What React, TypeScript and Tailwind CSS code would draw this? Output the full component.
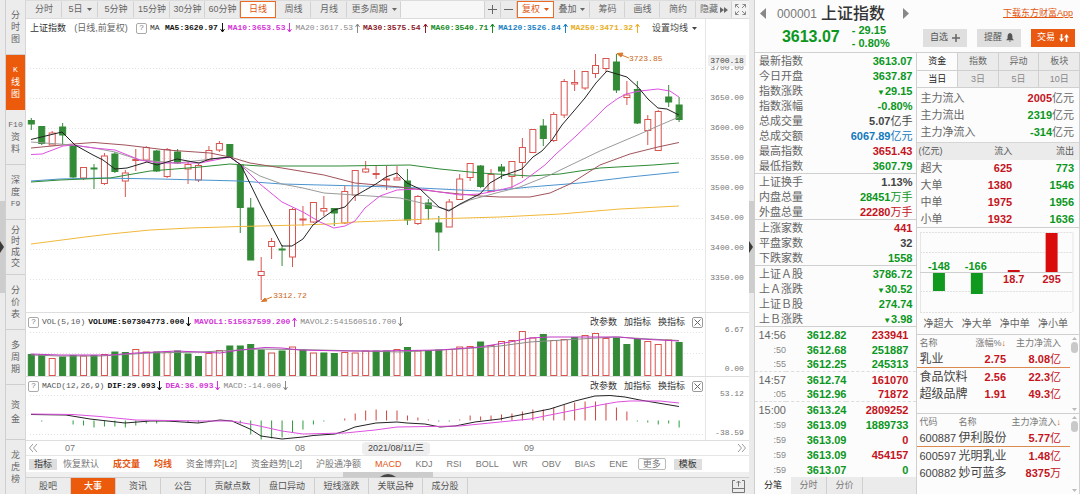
import React from "react";

type Dir = "r" | "g";
type Candle = [high: number, top: number, bottom: number, low: number, dir: Dir];

const RED = "#d9534f";
const GREEN = "#338a37";
const STEP = 10.45;
const xAt = (i: number) => 31.3 + i * STEP;

const candles: Candle[] = [
  [118, 120.5, 124, 130, "g"], [126, 126.5, 143.5, 145, "g"], [131, 133, 145, 145, "r"],
  [123, 127, 135, 145, "g"], [145, 145.5, 177, 178, "g"], [167, 167.5, 178, 180, "r"],
  [164, 168, 169, 189, "g"], [153, 156, 183.5, 185, "r"], [152, 154, 171.5, 173, "g"],
  [170, 173, 181, 197, "r"], [149, 159.5, 160.5, 171, "r"], [146, 147.5, 160, 162, "r"],
  [150, 151, 171, 172, "g"], [148, 149.5, 176.5, 178, "r"], [149, 152, 163, 164, "g"],
  [161, 164.5, 169, 184, "r"], [164, 165.5, 180, 182, "r"], [146, 150.5, 160, 161, "r"],
  [141, 143.5, 150, 152, "r"], [144, 144.5, 157, 157, "g"], [164, 165, 207.5, 233, "g"],
  [198, 208, 260, 260, "g"], [257, 271.5, 275.5, 300, "r"], [238, 241.5, 246.5, 259, "r"],
  [245, 249, 250, 266, "g"], [208, 209.5, 257, 267, "r"], [206, 219, 220, 226, "r"],
  [202, 202.5, 222, 223, "r"], [196, 208.5, 211, 216, "r"], [208, 208.5, 213, 226, "g"],
  [186, 191.5, 223, 224, "r"], [170, 170.5, 195, 201, "r"], [161, 169, 172, 173, "r"],
  [165, 173.5, 174.5, 179, "r"], [166, 179, 180, 190, "r"], [166, 178, 180, 180, "r"],
  [169, 181, 220, 225, "g"], [195, 196.5, 223.5, 225, "r"], [199, 203, 208.5, 220, "g"],
  [216, 223, 232, 251, "g"], [199, 202, 227, 227, "r"], [174, 179, 199.5, 200, "r"],
  [163, 163.5, 177.5, 181, "r"], [165, 166, 186.5, 188, "g"], [169, 174.5, 191.5, 192, "r"],
  [164, 167, 171, 179, "g"], [161, 161.5, 176.5, 188, "r"], [138, 147.5, 162.5, 178, "r"],
  [129, 129.5, 152.5, 153, "r"], [119, 126, 138.5, 146, "g"], [112, 114.5, 140.5, 142, "r"],
  [79, 81.5, 115, 118, "r"], [70, 82.5, 84, 91, "r"], [71, 71.5, 88, 90, "r"],
  [54, 65.5, 73.5, 78, "r"], [58, 58.5, 68.5, 72, "r"], [54, 62, 90, 93, "g"],
  [81, 95, 97.5, 105, "r"], [81, 89.5, 123, 124, "g"], [115, 119.5, 130.5, 145, "r"],
  [110, 111.5, 150.5, 151, "r"], [85, 97, 102, 107, "g"], [97, 105, 119.5, 122, "g"],
];

const volumes: number[] = [
  353.5, 354, 357.5, 356, 354.5, 355, 354.5, 353.5, 351, 351.5, 348.5, 351, 351, 351, 350, 353,
  355.5, 352.5, 349.5, 345, 345, 343.5, 349, 352, 350, 346, 349, 352, 352, 352.5, 351.5, 352,
  350, 350, 350, 348.5, 346.5, 350, 349.5, 349, 348.5, 346, 345.5, 341, 344.5, 340.5, 339.5, 330.5,
  337, 333.5, 339.5, 338.5, 336.5, 334.5, 332.5, 337.5, 337, 343.5, 338, 340.5, 343.5, 339, 341.5,
];
const volumeDirs = "ggrggrgrggrrgrgggrrggggrgrgrggrrrggrgrggrrrgrrrrrgrrgrrrgggrrrg";

const macdBars: number[] = [
  0, 1, 0, 0, 4, 5, 7, 6, 6, 7, 5, 3, 3, 1, 1, 2, 2, 1, 0, 0, 3, 14, 19, 18, 17, 12, 9, 4, 1, 0,
  -2, -7, -10, -11, -10, -10, -5, -3, -1, 1, 1, -1, -5, -4, -5, -6, -7, -9, -11, -11, -13, -16,
  -18, -19, -19, -17, -13, -9, 1, 2, 4, 3, 7,
];

const averages: { color: string; points: string }[] = [
  { color: "#f0b93a", points: "31,244 62,240 85,237 110,234 150,230 190,228 240,226.5 300,225 330,224 355,222 430,219 500,217 560,214 620,209 679,206" },
  { color: "#4a93cf", points: "31,181 60,179 100,178 160,179 240,181 282,184 360,186 420,188 480,191 500,190 530,187 580,183 630,177 679,172" },
  { color: "#2d8a34", points: "31,182 60,180 110,178 150,171 200,167 230,164 260,166 340,166 410,165 440,169 480,173 530,176 560,174 600,168 653,165 679,163" },
  { color: "#a0525a", points: "31,148 73,144 94,142.5 125,145 167,150 210,153 230,157 250,163 282,168 324,175 355,183 400,187 440,192 460,194 480,196 500,197 530,197 550,193 570,184 600,165 630,154 658,147 679,142.5" },
  { color: "#9a9a9a", points: "31,142 73,145 94,148 115,152 140,160 177,163 230,157 241,165 260,176 282,184 303,188 324,193 355,195 400,198 430,205 449,210 470,200 500,192 520,187 550,175 575,163 600,151 640,134 658,126 679,117" },
  { color: "#dd4fe0", points: "31,154.5 42,154 63,146 73,145 94,148 115,150 130,156 140,160 160,163 200,163 215,160 230,157 241,165 260,184 282,202 303,212 320,222 334,228 345,226 355,221 365,208 380,196 397,190 420,189 440,192 460,195 480,194 500,190 512,187 522,182 533,174 545,165 555,155 575,137 595,118 606,107 617,99 626,94 640,91 658,89 670,91 679,97" },
  { color: "#222222", points: "31,139.5 62,132 75,145 93,155 103,160 115,169 127,168 147,162 157,165 167,162 177,159 188,161 199,163 210,159 230,157 241,165 261,206 282,246 292,246 303,239 313,225 324,217 334,210 345,207 355,196 376,184 386,177 397,173 407,183 420,189 439,207 449,211 460,204 480,194 490,183 502,176 522,169 533,157 542,151 552,140 562,125 574,111 585,98 596,83 607,71 617,74 627,77 638,87 648,99 658,108 667,109 679,115" },
];

function Candles() {
  return (
    <>
      {candles.map(([hi, top, bot, lo, dir], i) => {
        const x = xAt(i);
        const c = dir === "r" ? RED : GREEN;
        return (
          <g key={i} stroke={c} strokeWidth="1">
            <line x1={x} x2={x} y1={hi} y2={top} />
            <line x1={x} x2={x} y1={bot} y2={lo} />
            <rect x={x - 3} y={top} width="6" height={bot - top} fill={dir === "r" ? "none" : c} />
          </g>
        );
      })}
    </>
  );
}

function Line({ points, color }: { points: string; color: string }) {
  return <polyline points={points} fill="none" stroke={color} strokeWidth="1" strokeLinejoin="round" />;
}

function Grid({ ys }: { ys: number[] }) {
  return (
    <>
      {ys.map((y) => (
        <line key={y} x1="30" x2="705" y1={y} y2={y} stroke="#e2e2e2" strokeDasharray="1 2" />
      ))}
    </>
  );
}

function Arrow({ up }: { up?: boolean }) {
  return (
    <svg width="5" height="10" viewBox="0 0 5 10" className="shrink-0" fill="none" stroke="currentColor" aria-hidden="true">
      {up ? <path d="M2.5 10V1M0.5 4L2.5 1L4.5 4" /> : <path d="M2.5 0V9M0.5 6L2.5 9L4.5 6" />}
    </svg>
  );
}

function Caret() {
  return (
    <svg width="5" height="3" viewBox="0 0 5 3" className="shrink-0" fill="currentColor" aria-hidden="true">
      <path d="M0 0H5L2.5 3Z" />
    </svg>
  );
}

function Reading({ text, color, bold, up }: { text: string; color: string; bold?: boolean; up?: boolean }) {
  return (
    <span className={`flex items-center gap-0.5 whitespace-nowrap font-['Liberation_Mono','Noto_Sans_CJK_SC',monospace] text-[8px] ${bold ? "font-bold" : ""} ${color}`}>
      {text}
      <Arrow up={up} />
    </span>
  );
}

function Help() {
  return (
    <button type="button" aria-label="帮助" className="flex h-[11px] w-[11px] shrink-0 items-center justify-center rounded-xs border border-[#aaa] text-[8px] leading-none text-[#777]">
      ?
    </button>
  );
}

function Splitter() {
  return (
    <div className="flex w-[6px] shrink-0 flex-col border-r border-[#cfcfcf] bg-[#ebebeb]">
      <div className="flex-[201]" />
      <button type="button" aria-label="折叠" className="flex flex-[91] items-center bg-[#cdcdcd]">
        <svg width="4" height="12" viewBox="0 0 4 12" aria-hidden="true">
          <path d="M0 0L4 6L0 12Z" fill="#3a3a3a" />
        </svg>
      </button>
      <div className="flex-[202]" />
    </div>
  );
}

const railItems = [
  ["分", "时", "图"], ["K", "线", "图"], ["F10", "资", "料"], ["深", "度", "F9"], ["分", "时", "成", "交"],
  ["分", "价", "表"], ["多", "周", "期"], ["资", "金"], ["龙", "虎", "榜"],
];

function Rail() {
  return (
    <nav className="flex w-5 shrink-0 flex-col border-r border-[#d6d6d6] bg-[#ececec]">
      {railItems.map((chars, i) => (
        <a
          key={i}
          href="#"
          className={`flex flex-1 flex-col items-center justify-center border-b ${chars.length === 4 ? "text-[9px] leading-[11px]" : chars.length === 2 ? "text-[9px] leading-[14px]" : "text-[9px] leading-[12px]"} ${i === 1 ? "border-[#ec5a0c] bg-[#ec5a0c] text-white" : "border-[#cfcfcf] text-[#666]"}`}
        >
          {chars.map((c) => (
            <span key={c} className={/[A-Z]/.test(c) ? "font-['Liberation_Mono',monospace] text-[8px]" : ""}>{c}</span>
          ))}
        </a>
      ))}
    </nav>
  );
}

const periods: { label: string; menu?: boolean; width: string }[] = [
  { label: "分时", width: "w-9" }, { label: "5日", menu: true, width: "w-9" }, { label: "5分钟", width: "w-9" },
  { label: "15分钟", width: "w-9" }, { label: "30分钟", width: "w-[35px]" }, { label: "60分钟", width: "w-[35px]" },
  { label: "日线", width: "w-9" }, { label: "周线", width: "w-[35px]" }, { label: "月线", width: "w-9" },
  { label: "更多周期", menu: true, width: "w-[54px]" },
];
const tools: { label: string; menu?: boolean; width: string }[] = [
  { label: "复权", menu: true, width: "w-[37px]" }, { label: "叠加", menu: true, width: "w-9" },
  { label: "筹码", width: "w-[35px]" }, { label: "画线", width: "w-[35px]" }, { label: "简约", width: "w-9" },
];

function Toolbar() {
  const base = "flex h-full shrink-0 items-center justify-center gap-1 whitespace-nowrap border";
  const idle = "border-transparent border-r-[#d2d2d2] bg-[#ebebeb] text-[#666]";
  const active = "border-[#ec6a22] bg-white text-[#e2560f]";
  return (
    <div className="flex h-[19px] items-stretch border-y border-[#dcdcdc] bg-[#f7f7f7] text-[9px] leading-none">
      {periods.map((p) => (
        <button key={p.label} type="button" className={`${base} ${p.width} ${p.label === "日线" ? active : idle}`}>
          {p.label}
          {p.menu && <Caret />}
        </button>
      ))}
      <div className="flex-1 border-r border-[#d2d2d2]" />
      <button type="button" aria-label="放大" className={`${base} w-4 ${idle}`}>
        <svg width="9" height="9" viewBox="0 0 9 9" stroke="currentColor" aria-hidden="true"><path d="M4.5 0V9M0 4.5H9" /></svg>
      </button>
      <button type="button" aria-label="缩小" className={`${base} w-4 ${idle}`}>
        <svg width="9" height="9" viewBox="0 0 9 9" stroke="currentColor" aria-hidden="true"><path d="M0 4.5H9" /></svg>
      </button>
      {tools.map((p) => (
        <button key={p.label} type="button" className={`${base} ${p.width} ${p.label === "复权" ? active : idle}`}>
          {p.label}
          {p.menu && <Caret />}
        </button>
      ))}
      <button type="button" className={`${base} w-9 ${idle}`}>
        隐藏
        <svg width="8" height="6" viewBox="0 0 8 6" fill="currentColor" className="-ml-0.5" aria-hidden="true"><path d="M0 0L4 3L0 6ZM4 0L8 3L4 6Z" /></svg>
      </button>
      <button type="button" aria-label="全屏" className="flex w-[17px] items-center justify-center bg-[#f3f3f3] text-[#888]">
        <svg width="11" height="11" viewBox="0 0 11 11" fill="none" stroke="currentColor" aria-hidden="true">
          <path d="M0.5 3.5V0.5H3.5M0.5 0.5L4 4M7.5 0.5H10.5V3.5M10.5 0.5L7 4M0.5 7.5V10.5H3.5M0.5 10.5L4 7M10.5 7.5V10.5H7.5M10.5 10.5L7 7" />
        </svg>
      </button>
    </div>
  );
}

const mono = "font-['Liberation_Mono','Noto_Sans_CJK_SC',monospace]";

function MainChart() {
  return (
    <section className="flex border-b border-[#dedede]">
      <div className="min-w-0 flex-1 border-r border-[#e6e6e6]">
        <div className="flex h-[18px] items-center gap-[3px] pl-1 text-[9px] leading-none text-[#333]">
          <span className="whitespace-nowrap">上证指数</span>
          <span className="w-16 whitespace-nowrap text-center text-[#666]">(日线,前复权)</span>
          <Help />
          <span className={`${mono} w-3 text-[8px]`}>MA</span>
          <Reading text="MA5:3620.97" color="text-[#111]" bold />
          <Reading text="MA10:3653.53" color="text-[#d335d6]" bold />
          <Reading text="MA20:3617.53" color="text-[#888]" up />
          <Reading text="MA30:3575.54" color="text-[#8c1d2c]" bold up />
          <Reading text="MA60:3540.71" color="text-[#138a25]" bold up />
          <Reading text="MA120:3526.84" color="text-[#1b7fc4]" bold up />
          <Reading text="MA250:3471.32" color="text-[#e9ae22]" bold up />
          <button type="button" className="ml-auto flex items-center gap-1 whitespace-nowrap pr-2 text-[#444]">
            设置均线
            <Caret />
          </button>
        </div>
        <div className="relative">
          <svg viewBox="26 37 679 275" preserveAspectRatio="none" className="block h-[275px] w-full" role="img" aria-label="K线图">
            <Grid ys={[68.5, 98.5, 128.5, 158.5, 188.5, 218.5, 249.5, 279.5]} />
            <Candles />
            {averages.map((a) => (
              <Line key={a.color} points={a.points} color={a.color} />
            ))}
            <g stroke="#d9772b" fill="#d9772b">
              <path d="M629 58L619 54" />
              <path d="M617 53.5L623 53L621 57Z" />
              <path d="M272 297L263 300.5" />
              <path d="M261.5 301.5L265 298L267 301Z" />
            </g>
          </svg>
          <span className={`${mono} absolute left-[88.8%] top-[17px] text-[8px] leading-[10px] text-[#c9671c]`}>3723.85</span>
          <span className={`${mono} absolute left-[36.4%] top-[254px] text-[8px] leading-[10px] text-[#c9671c]`}>3312.72</span>
        </div>
      </div>
      <div className={`${mono} relative w-[43px] pr-[5px] pt-[34px] text-right text-[8px] text-[#777]`}>
        {["3700.00", "3650.00", "3600.00", "3550.00", "3500.00", "3450.00", "3400.00", "3350.00"].map((v) => (
          <div key={v} className="h-[30px] leading-[30px]">{v}</div>
        ))}
        <span className="absolute left-[2px] right-[3px] top-[36px] bg-[#efefef] pr-0.5 leading-[11px] text-[#444]">3700.18</span>
      </div>
    </section>
  );
}

function SubChart({ name, readings, high, low, label, viewBox, children }: {
  name: string; readings: React.ReactNode; high: string; low: string; label: string; viewBox: string; children: React.ReactNode;
}) {
  return (
    <section className="flex border-b border-[#dedede]">
      <div className="min-w-0 flex-1 border-r border-[#e6e6e6]">
        <div className="flex h-[18px] items-center gap-[3px] pl-0.5 leading-none">
          <Help />
          <span className={`${mono} whitespace-nowrap text-[8px] text-[#555]`}>{name}</span>
          {readings}
          <div className="ml-auto flex items-center gap-[7px] pr-0.5 text-[9px] text-[#333]">
            <button type="button">改参数</button>
            <button type="button">加指标</button>
            <button type="button">换指标</button>
            <button type="button" aria-label="关闭" className="flex h-[11px] w-[11px] items-center justify-center rounded-xs border border-[#999]">
              <svg width="7" height="7" viewBox="0 0 7 7" stroke="#666" aria-hidden="true"><path d="M0.5 0.5L6.5 6.5M6.5 0.5L0.5 6.5" /></svg>
            </button>
          </div>
        </div>
        <svg viewBox={viewBox} preserveAspectRatio="none" className="block h-[45px] w-full" role="img" aria-label={label}>
          {children}
        </svg>
      </div>
      <div className={`${mono} flex w-[43px] flex-col justify-between pr-[5px] pb-0.5 pt-3 text-right text-[8px] leading-[10px] text-[#777]`}>
        <span>{high}</span>
        <span>{low}</span>
      </div>
    </section>
  );
}

function VolumeChart() {
  return (
    <SubChart
      name="VOL(5,10)" high="6.67" low="0.00" label="成交量图" viewBox="26 330 679 45"
      readings={
        <>
          <Reading text="VOLUME:507304773.000" color="text-[#111]" bold />
          <Reading text="MAVOL1:515637599.200" color="text-[#d335d6]" bold up />
          <Reading text="MAVOL2:541560516.700" color="text-[#888]" />
        </>
      }
    >
      <Grid ys={[331.5, 352.5]} />
      {volumes.map((y, i) => {
        const red = volumeDirs[i] === "r";
        return <rect key={i} x={xAt(i) - 3} y={y} width="6" height={374.5 - y} fill={red ? "none" : GREEN} stroke={red ? RED : GREEN} />;
      })}
      <Line color="#8a8a8a" points="31,354 60,355 100,355 150,352 200,351 260,348 320,349 400,351 460,348 500,345 530,341 580,338 615,336 650,338 679,339.5" />
      <Line color="#c238c6" points="31,353 60,354 110,354 136,352 177,350 220,352 240,349 265,346.5 282,347 300,349 345,350 376,350 440,349 480,346 510,341 530,337 550,336 580,336 620,336 640,338 679,340" />
    </SubChart>
  );
}

function MacdChart() {
  return (
    <SubChart
      name="MACD(12,26,9)" high="53.12" low="-38.59" label="MACD图" viewBox="26 394 679 45"
      readings={
        <>
          <Reading text="DIF:29.093" color="text-[#111]" bold />
          <Reading text="DEA:36.093" color="text-[#d335d6]" bold />
          <Reading text="MACD:-14.000" color="text-[#888]" />
        </>
      }
    >
      <Grid ys={[394.5, 433.5]} />
      {macdBars.map((v, i) => (
        <line key={i} x1={xAt(i)} x2={xAt(i)} y1="419.5" y2={419.5 + v} stroke={v > 0 ? "#2f9a3c" : "#d0433f"} />
      ))}
      <Line color="#222" points="31,413.5 66,414 90,418 125,422 150,420 167,420 198,422 220,419 232,420 250,428 261,435 282,438 303,436 313,434.5 335,433 345,430 355,426 376,422 397,421 407,422 425,423 440,426 455,425 475,421 500,418 525,413 550,408 575,400 595,395 610,394.5 625,396 640,399 679,405.5" />
      <Line color="#dd4fe0" points="31,413 73,413.5 100,415.5 136,419 200,420 232,420 255,424 282,430 303,433 345,432 375,429 397,426 460,425 500,421 530,418 555,413 575,409 600,404 617,401 630,400 660,400 679,402" />
    </SubChart>
  );
}

function DateAxis() {
  return (
    <div className="flex h-[15px] items-center border-b border-[#e6e6e6] pl-[3px] pr-[3px] text-[9px] leading-none text-[#777]">
      <button type="button" aria-label="向前" className="w-9 text-left">
        <svg width="8" height="8" viewBox="0 0 8 8" fill="none" stroke="#999" aria-hidden="true"><path d="M4 0L0.5 4L4 8M8 0L4.5 4L8 8" /></svg>
      </button>
      <span className="flex-[230]">07</span>
      <span className="flex-[67]">08</span>
      <span className="w-[68px] whitespace-nowrap rounded-sm bg-[#eeeeee] text-center leading-[13px] text-[#444]">2021/08/11/三</span>
      <span className="flex-[94]" />
      <span className="flex-[214]">09</span>
      <button type="button" aria-label="向后">
        <svg width="8" height="8" viewBox="0 0 8 8" fill="none" stroke="#999" aria-hidden="true"><path d="M0 0L3.5 4L0 8M4 0L7.5 4L4 8" /></svg>
      </button>
    </div>
  );
}

const indicators = ["恢复默认", "成交量", "均线", "资金博弈[L2]", "资金趋势[L2]", "沪股通净额", "MACD", "KDJ", "RSI", "BOLL", "WR", "OBV", "BIAS", "ENE"];
const litIndicators = ["成交量", "均线", "MACD"];

function IndicatorBar() {
  return (
    <div className="flex h-4 items-center whitespace-nowrap pl-[3px] text-[9px] leading-none text-[#777]">
      <button type="button" className="mr-1.5 h-[11px] w-7 bg-[#dedede] text-[#333]">指标</button>
      <div className="flex gap-[14px]">
        {indicators.map((t) => (
          <button key={t} type="button" className={litIndicators.includes(t) ? (t === "MACD" ? "text-[#e2560f]" : "font-bold text-[#e2560f]") : ""}>{t}</button>
        ))}
      </div>
      <button type="button" className="ml-2.5 h-3 w-7 rounded-xs border border-[#bbb] leading-none">更多</button>
      <button type="button" className="ml-2 h-[11px] w-7 bg-[#dedede] text-[#333]">模板</button>
    </div>
  );
}

const bottomTabs: [string, string][] = [
  ["股吧", "w-[45px]"], ["大事", "w-[45px]"], ["资讯", "w-[45px]"], ["公告", "w-[45px]"], ["贡献点数", "w-[54px]"],
  ["盘口异动", "w-[55px]"], ["短线涨跌", "w-[54px]"], ["关联品种", "w-[54px]"], ["成分股", "w-[45px]"],
];

function BottomTabs() {
  return (
    <>
      <div className="flex h-[5px] bg-[#efefef]">
        <div className="flex-[317]" />
        <button type="button" aria-label="展开" className="flex flex-[90] items-end justify-center bg-[#cccccc]">
          <svg width="16" height="3" viewBox="0 0 16 3" aria-hidden="true"><path d="M0 3Q8 -3 16 3Z" fill="#444" /></svg>
        </button>
        <div className="flex-[316]" />
      </div>
      <nav className="flex h-[18px] items-stretch border-y border-[#cfcfcf] bg-[#ececec] text-[9px] leading-none text-[#555]">
        {bottomTabs.map(([t, w]) => (
          <a key={t} href="#" className={`flex shrink-0 items-center justify-center border-r border-[#cfcfcf] ${w} ${t === "大事" ? "bg-[#ec5a0c] font-medium text-white" : ""}`}>{t}</a>
        ))}
        <button type="button" aria-label="弹出" className="ml-auto mr-1 self-center">
          <svg width="13" height="13" viewBox="0 0 13 13" fill="none" stroke="#777" aria-hidden="true">
            <path d="M3 0.5H0.5V12.5H12.5V0.5H10M0.5 8.5H12.5M6.5 6.5V1M4.5 3L6.5 1L8.5 3" />
          </svg>
        </button>
      </nav>
    </>
  );
}

type Tone = "g" | "r" | "k" | "b";
const toneClass: Record<Tone, string> = { g: "text-[#0b971d]", r: "text-[#c4141c]", k: "text-[#444]", b: "text-[#1279bd]" };

function Num({ v, unit, tone }: { v: string; unit?: string; tone: Tone }) {
  const falling = v.startsWith("▼");
  return (
    <span className={`font-bold ${toneClass[tone]}`}>
      {falling && <span className="text-[8px] leading-none">▼</span>}
      {falling ? v.slice(1) : v}
      {unit && <span className="font-normal leading-none">{unit}</span>}
    </span>
  );
}

const quoteGroups: [string, string, Tone, string?][][] = [
  [
    ["最新指数", "3613.07", "g"], ["今日开盘", "3637.87", "g"], ["指数涨跌", "▼29.15", "g"], ["指数涨幅", "-0.80%", "g"],
    ["总成交量", "5.07", "k", "亿手"], ["总成交额", "6067.89", "b", "亿元"], ["最高指数", "3651.43", "r"], ["最低指数", "3607.79", "g"],
  ],
  [["上证换手", "1.13%", "k"], ["内盘总量", "28451", "g", "万手"], ["外盘总量", "22280", "r", "万手"]],
  [["上涨家数", "441", "r"], ["平盘家数", "32", "k"], ["下跌家数", "1558", "g"]],
  [["上证Ａ股", "3786.72", "g"], ["上Ａ涨跌", "▼30.52", "g"], ["上证Ｂ股", "274.74", "g"], ["上Ｂ涨跌", "▼3.98", "g"]],
];

const ticks: [string, string, string, Tone][] = [
  ["14:56", "3612.82", "233941", "r"], [":50", "3612.68", "251887", "g"], [":55", "3612.25", "245313", "g"],
  ["14:57", "3612.74", "161070", "r"], [":05", "3612.96", "71872", "r"], ["15:00", "3613.24", "2809252", "r"],
  [":59", "3613.09", "1889733", "g"], [":59", "3613.09", "0", "r"], [":59", "3613.09", "454157", "r"], [":59", "3613.07", "0", "g"],
];

function QuoteHeader() {
  return (
    <header className="h-[53px] border-b border-[#d0d0d0] px-[5px]">
      <div className="flex h-[27px] items-center">
        <button type="button" aria-label="上一个">
          <svg width="6" height="11" viewBox="0 0 6 11" aria-hidden="true"><path d="M6 0V11L0 5.5Z" fill="#888" /></svg>
        </button>
        <span className="ml-[11px] text-[12px] text-[#777]">000001</span>
        <h1 className="ml-1 whitespace-nowrap text-[16px] font-medium leading-none text-[#333]">上证指数</h1>
        <button type="button" aria-label="下一个" className="ml-[18px]">
          <svg width="6" height="11" viewBox="0 0 6 11" aria-hidden="true"><path d="M0 0V11L6 5.5Z" fill="#888" /></svg>
        </button>
        <a href="#" className="ml-auto whitespace-nowrap pr-0.5 text-[9px] text-[#e2560f] underline">下载东方财富App</a>
      </div>
      <div className="flex h-[25px] items-center">
        <strong className="mb-1.5 ml-[22px] text-[16px] leading-none text-[#0b971d]">3613.07</strong>
        <div className="mb-1.5 ml-3 whitespace-pre text-[11px] font-bold leading-[13px] text-[#0b971d]">
          <div>- 29.15</div>
          <div>- 0.80%</div>
        </div>
        <div className="mb-1 ml-auto flex gap-2.5 text-[9px] text-[#555]">
          <button type="button" className="flex h-[18px] w-11 items-center justify-center gap-1 bg-[#dfdfdf]">
            自选
            <svg width="8" height="8" viewBox="0 0 8 8" stroke="#666" strokeWidth="1.5" aria-hidden="true"><path d="M4 0V8M0 4H8" /></svg>
          </button>
          <button type="button" className="flex h-[18px] w-11 items-center justify-center gap-1 bg-[#dfdfdf]">
            提醒
            <svg width="8" height="9" viewBox="0 0 8 9" fill="#555" aria-hidden="true"><path d="M4 0C5.8 0.4 6.4 1.8 6.4 3.5V5.5L8 7.2H0L1.6 5.5V3.5C1.6 1.8 2.2 0.4 4 0ZM3 7.8H5L4 9Z" /></svg>
          </button>
          <button type="button" className="flex h-[18px] w-11 items-center justify-center gap-1 bg-[#e9590f] text-white">
            交易
            <svg width="10" height="8" viewBox="0 0 10 8" fill="#fff" aria-hidden="true"><path d="M1.7 0H3.3V4.5H5L2.5 8L0 4.5H1.7ZM6.7 8H8.3V3.5H10L7.5 0L5 3.5H6.7Z" /></svg>
          </button>
        </div>
      </div>
    </header>
  );
}

function QuoteColumn() {
  return (
    <div className="flex min-w-0 flex-1 flex-col border-r border-[#d0d0d0]">
      <table className="w-full border-separate border-spacing-0 text-[11px] leading-[14px]">
        {quoteGroups.map((g, i) => (
          <tbody key={i}>
            {g.map(([k, v, tone, unit], j) => {
              const edge = j === g.length - 1 ? "h-4 border-b border-[#cfcfcf]" : "h-[15px]";
              return (
                <tr key={k}>
                  <th scope="row" className={`whitespace-nowrap p-0 pl-1 text-left align-middle font-normal text-[#666] ${edge}`}>{k}</th>
                  <td className={`whitespace-nowrap p-0 pr-1 text-right align-middle ${edge}`}><Num v={v} unit={unit} tone={tone} /></td>
                </tr>
              );
            })}
          </tbody>
        ))}
      </table>
      <table className="w-full border-separate border-spacing-0 text-[11px] leading-[14px]">
        <tbody>
          {ticks.map(([t, p, v, tone], i) => {
            const edge = i === 2 || i === 4 ? "border-b border-dashed border-[#ddd]" : "";
            return (
              <tr key={i}>
                <td className={`h-[15px] w-[31px] p-0 text-right align-middle ${edge} ${t.length === 3 ? "text-[9px] text-[#888]" : "text-[11px] text-[#666]"}`}>{t}</td>
                <td className={`h-[15px] p-0 text-right align-middle ${edge}`}><Num v={p} tone="g" /></td>
                <td className={`h-[15px] w-[70px] p-0 pr-2 text-right align-middle ${edge}`}><Num v={v} tone={tone} /></td>
              </tr>
            );
          })}
        </tbody>
      </table>
      <div className="flex flex-1 items-stretch border-b border-[#c8c8c8] bg-[#ebebeb] text-[9px] leading-none text-[#777]">
        <button type="button" className="w-9 bg-[#fcfcfc] text-[#222]">分笔</button>
        <button type="button" className="w-9 border-r border-[#d0d0d0]">分时</button>
        <button type="button" className="w-9 border-r border-[#d0d0d0]">分价</button>
      </div>
    </div>
  );
}

const flows: [string, string, Tone][] = [["主力流入", "2005", "r"], ["主力流出", "2319", "g"], ["主力净流入", "-314", "g"]];
const orders: [string, string, string][] = [["超大", "625", "773"], ["大单", "1380", "1546"], ["中单", "1975", "1956"], ["小单", "1932", "1636"]];

function NetChart() {
  return (
    <figure className="border-b border-[#cfcfcf] pt-1">
      <svg viewBox="918 234 162 81" preserveAspectRatio="none" className="block h-[81px] w-full" role="img" aria-label="净流入柱状图">
        {[234.5, 254.5, 293.5, 314.5].map((y) => (
          <line key={y} x1="921" x2="1074" y1={y} y2={y} stroke="#e0e0e0" strokeDasharray="2 1" />
        ))}
        <path d="M921.5 234V314M1074.5 234V314" stroke="#e6e6e6" />
        <line x1="921" x2="1074" y1="274.5" y2="274.5" stroke="#cfcfcf" />
        <rect x="934" y="275" width="12" height="18" fill="#0f9a1f" />
        <rect x="972" y="275" width="12" height="21" fill="#0f9a1f" />
        <rect x="1009" y="272" width="12" height="2" fill="#cc0f12" />
        <rect x="1047" y="235" width="12" height="39" fill="#d90b0b" />
        <g fontSize="11" fontWeight="bold" textAnchor="middle">
          <text x="940" y="272" fill="#0b971d">-148</text>
          <text x="977" y="272" fill="#0b971d">-166</text>
          <text x="1015" y="285" fill="#c4141c">18.7</text>
          <text x="1053" y="285" fill="#c4141c">295</text>
        </g>
      </svg>
      <figcaption className="flex h-[21px] items-center justify-between pl-1.5 pr-[11px] text-[10px] leading-none text-[#666]">
        <span>净超大</span><span>净大单</span><span>净中单</span><span>净小单</span>
      </figcaption>
    </figure>
  );
}

function ScrollBar() {
  return (
    <div className="flex w-[9px] shrink-0 flex-col items-center justify-between pb-0.5 pt-0.5">
      <div className="flex flex-col items-center gap-0.5">
        <svg width="5" height="3" viewBox="0 0 5 3" fill="#bbb" aria-hidden="true"><path d="M0 3H5L2.5 0Z" /></svg>
        <div className="h-[11px] w-[7px] rounded-sm bg-[#c9c9c9]" />
      </div>
      <svg width="5" height="3" viewBox="0 0 5 3" fill="#bbb" aria-hidden="true"><path d="M0 0H5L2.5 3Z" /></svg>
    </div>
  );
}

const sectors: [string, string, string, string][] = [["乳业", "2.75", "8.08", "亿"], ["食品饮料", "2.56", "22.3", "亿"], ["超级品牌", "1.91", "49.3", "亿"]];
const stocks: [string, string, string, string][] = [["600887", "伊利股份", "5.77", "亿"], ["600597", "光明乳业", "1.48", "亿"], ["600882", "妙可蓝多", "8375", "万"]];

function FlowColumn() {
  const tab = "flex-1 border-r border-[#d0d0d0] last:border-r-0";
  const mark = (i: number) => (i === 0 ? "border-b border-[#dd8a50]" : "");
  return (
    <div className="flex min-w-0 flex-1 flex-col border-r border-[#d0d0d0]">
      <div className="flex h-[18px] border-b border-[#d0d0d0] text-[9px] leading-none text-[#666]">
        {["资金", "指数", "异动", "板块"].map((t, i) => (
          <button key={t} type="button" className={`${tab} ${i === 0 ? "text-[#222]" : "bg-[#ebebeb]"}`}>{t}</button>
        ))}
      </div>
      <div className="flex h-[17px] border-b border-[#d0d0d0] text-[9px] leading-none text-[#888]">
        {["当日", "3日", "5日", "10日"].map((t, i) => (
          <button key={t} type="button" className={`${tab} ${i === 0 ? "text-[#222]" : "bg-[#ebebeb]"}`}>{t}</button>
        ))}
      </div>
      <dl className="pb-px pt-0.5 text-[11px] leading-[17px]">
        {flows.map(([k, v, tone]) => (
          <div key={k} className="flex h-[17px] justify-between pl-[3px] pr-[5px]">
            <dt className="text-[#666]">{k}</dt>
            <dd className="text-[#666]"><Num v={v} tone={tone} />亿元</dd>
          </div>
        ))}
      </dl>
      <table className="w-full table-fixed border-b border-[#cfcfcf] text-[11px] leading-4">
        <thead>
          <tr className="h-[17px] border-t border-[#d6d6d6] bg-[#ebebeb] text-[9px] text-[#555]">
            <th scope="col" className="p-0 pl-px text-left align-middle font-normal">(亿元)</th>
            <th scope="col" className="p-0 pr-[13px] text-right align-middle font-normal">流入</th>
            <th scope="col" className="p-0 pr-[5px] text-right align-middle font-normal">流出</th>
          </tr>
        </thead>
        <tbody>
          {orders.map(([k, a, b]) => (
            <tr key={k} className="h-[17px]">
              <th scope="row" className="p-0 pl-[3px] text-left align-middle font-normal text-[#666]">{k}</th>
              <td className="p-0 pr-[13px] text-right align-middle"><Num v={a} tone="r" /></td>
              <td className="p-0 pr-[5px] text-right align-middle"><Num v={b} tone="g" /></td>
            </tr>
          ))}
        </tbody>
      </table>
      <NetChart />
      <div className="flex h-[79px] border-b border-[#cfcfcf]">
        <div className="min-w-0 flex-1">
          <table className="w-full border-separate border-spacing-0 text-[11px] leading-4">
            <thead>
              <tr className="text-[9px] text-[#777]">
                <th scope="col" className="h-4 p-0 pl-0.5 text-left align-middle font-normal">名称</th>
                <th scope="col" className="h-4 p-0 text-right align-middle font-normal">涨幅%<span className="text-[#e2560f]">↓</span></th>
                <th scope="col" className="h-4 w-[64px] p-0 pr-[9px] text-right align-middle font-normal">主力净流入</th>
              </tr>
            </thead>
            <tbody>
              {sectors.map(([n, p, v, u], i) => (
                <tr key={n}>
                  <th scope="row" className={`h-[17px] whitespace-nowrap p-0 pl-0.5 text-left align-middle text-[12px] font-normal text-[#444] ${mark(i)}`}>{n}</th>
                  <td className={`h-[17px] p-0 text-right align-middle ${mark(i)}`}><Num v={p} tone="r" /></td>
                  <td className={`h-[17px] whitespace-nowrap p-0 pr-[9px] text-right align-middle ${mark(i)}`}><Num v={v} unit={u} tone="r" /></td>
                </tr>
              ))}
            </tbody>
          </table>
        </div>
        <ScrollBar />
      </div>
      <div className="flex min-h-[78px] flex-1 border-b border-[#cfcfcf]">
        <div className="min-w-0 flex-1">
          <table className="w-full border-separate border-spacing-0 text-[11px] leading-4">
            <thead>
              <tr className="text-[9px] text-[#777]">
                <th scope="col" className="h-4 w-[41px] p-0 pl-0.5 text-left align-middle font-normal">代码</th>
                <th scope="col" className="h-4 p-0 text-left align-middle font-normal">名称</th>
                <th scope="col" className="h-4 p-0 pr-[9px] text-right align-middle font-normal">主力净流入<span className="text-[#e2560f]">↓</span></th>
              </tr>
            </thead>
            <tbody>
              {stocks.map(([c, n, v, u], i) => (
                <tr key={c}>
                  <td className={`h-[17px] p-0 pl-0.5 align-middle text-[#444] ${mark(i)}`}>{c}</td>
                  <th scope="row" className={`h-[17px] whitespace-nowrap p-0 text-left align-middle text-[12px] font-normal text-[#444] ${mark(i)}`}>{n}</th>
                  <td className={`h-[17px] whitespace-nowrap p-0 pr-[9px] text-right align-middle ${mark(i)}`}><Num v={v} unit={u} tone="r" /></td>
                </tr>
              ))}
            </tbody>
          </table>
        </div>
        <ScrollBar />
      </div>
    </div>
  );
}

export default function App() {
  return (
    <div className="flex min-h-screen bg-white font-['Liberation_Sans','Noto_Sans_CJK_SC',sans-serif]">
      <Splitter />
      <Rail />
      <main className="flex min-w-0 flex-1 flex-col">
        <Toolbar />
        <MainChart />
        <VolumeChart />
        <MacdChart />
        <DateAxis />
        <IndicatorBar />
        <BottomTabs />
      </main>
      <Splitter />
      <aside className="flex w-[30.1%] shrink-0 flex-col bg-[#fcfcfc]">
        <QuoteHeader />
        <div className="flex flex-1">
          <QuoteColumn />
          <FlowColumn />
        </div>
      </aside>
    </div>
  );
}
